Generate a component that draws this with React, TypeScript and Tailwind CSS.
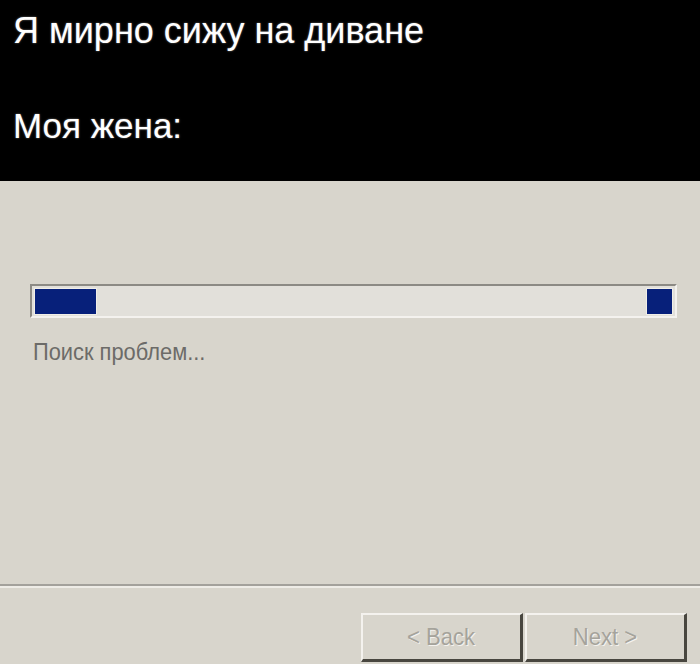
export default function App() {
  return (
    <div className="w-[700px] h-[664px] overflow-hidden flex flex-col font-['Liberation_Sans',Arial,sans-serif]">
      <div className="h-[181px] shrink-0 bg-black pl-[13px] pt-[10px] text-white">
        <div className="text-[36px] leading-[42px] [text-shadow:0_0_2px_rgba(255,255,255,0.5)]">
          Я мирно сижу на диване
        </div>
        <div className="mt-[53px] text-[35px] leading-[42px] [text-shadow:0_0_2px_rgba(255,255,255,0.5)]">
          Моя жена:
        </div>
      </div>

      <div className="flex-1 bg-[#d8d5cc] flex flex-col">
        {/* progress bar */}
        <div className="mt-[103px] ml-[30px] w-[647px] h-[34px] shrink-0 border-t-2 border-l-2 border-t-[#8c8a84] border-l-[#8c8a84] border-b-2 border-r-2 border-b-[#f4f2ee] border-r-[#f4f2ee] bg-[#e2e0da] flex justify-between items-center px-[3px]">
          <div className="w-[61px] h-[25px] bg-[#07207a] shadow-[0_0_0_1px_#f0eee8]"></div>
          <div className="w-[25px] h-[25px] bg-[#07207a] shadow-[0_0_0_1px_#f0eee8]"></div>
        </div>

        <div className="mt-[20px] ml-[33px] text-[23px] leading-[28px] text-[#6c6b68] scale-x-[0.95] origin-left">
          Поиск проблем...
        </div>

        {/* separator */}
        <div className="mt-[218px] h-[4px] shrink-0 border-t-2 border-t-[#a3a19b] border-b-2 border-b-[#eeece6]"></div>

        {/* buttons */}
        <div className="mt-[25px] flex justify-end pr-[13px]">
          <button className="w-[162px] h-[49px] shrink-0 border-t-2 border-l-2 border-t-[#f4f2ee] border-l-[#f4f2ee] border-r-[3px] border-b-[3px] border-r-[#48463f] border-b-[#48463f] bg-[#d8d5cc] text-[24px] text-[#a5a39b] [text-shadow:1px_1px_0_#f4f2ee]">
            <span className="inline-block scale-x-[0.92]">&lt; Back</span>
          </button>
          <button className="ml-[2px] w-[162px] h-[49px] shrink-0 border-t-2 border-l-2 border-t-[#f4f2ee] border-l-[#f4f2ee] border-r-[3px] border-b-[3px] border-r-[#48463f] border-b-[#48463f] bg-[#d8d5cc] text-[24px] text-[#a5a39b] [text-shadow:1px_1px_0_#f4f2ee]">
            <span className="inline-block scale-x-[0.92]">Next &gt;</span>
          </button>
        </div>
      </div>
    </div>
  )
}
